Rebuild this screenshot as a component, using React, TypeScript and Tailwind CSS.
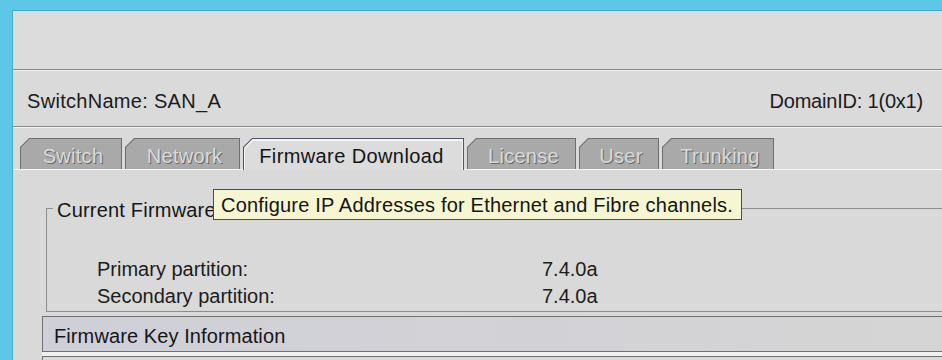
import React from "react";

const font = "font-['Liberation_Sans',Arial,sans-serif]";

function Tab({
  label,
  className,
  active,
}: {
  label: string;
  className: string;
  active?: boolean;
}) {
  if (active) {
    return (
      <div className={`relative z-10 -mb-px h-[32px] ${className}`}>
        <div className="absolute inset-0 bg-[#4f5566] [clip-path:polygon(0_9px,9px_0,100%_0,100%_100%,0_100%)]" />
        <div className="absolute left-[1px] right-[1px] top-[1px] bottom-0 bg-[#f4f4f4] [clip-path:polygon(0_8.5px,8.5px_0,100%_0,100%_100%,0_100%)]" />
        <div className="absolute left-[2px] right-[2px] top-[3px] bottom-0 bg-[#dcdcdc] [clip-path:polygon(0_8px,8px_0,100%_0,100%_100%,0_100%)]" />
        <div className="relative flex h-full items-center justify-center pt-[4px] pr-[4px] text-[20px] tracking-[0.4px] text-[#151515]">
          {label}
        </div>
      </div>
    );
  }
  return (
    <div className={`relative h-[31px] ${className}`}>
      <div className="absolute inset-0 bg-[#6e6e6e] [clip-path:polygon(0_9px,9px_0,100%_0,100%_100%,0_100%)]" />
      <div className="absolute left-[1px] right-[1px] top-[1px] bottom-0 bg-[#a9a9a9] [clip-path:polygon(0_8.5px,8.5px_0,100%_0,100%_100%,0_100%)]" />
      <div className="relative flex h-full items-center justify-center pt-[4px] pl-[4px] text-[20px] tracking-[0.3px] text-[#dadada] [text-shadow:1px_1px_0_#666666]">
        {label}
      </div>
    </div>
  );
}

export default function App() {
  return (
    <div
      className={`relative h-[360px] w-[942px] overflow-hidden bg-[#5cc7e7] pt-[10px] pl-[12px] ${font}`}
    >
      <div className="flex h-[350px] flex-col border-l border-t border-[#4aa9c8] bg-[#dadada]">
        {/* top empty area */}
        <div className="h-[58px] bg-[#dcdcdc]" />
        <div className="border-t border-[#888888]" />
        <div className="border-t border-[#f2f2f2]" />
        {/* header row */}
        <div className="flex h-[55px] items-center justify-between pt-[5px] pl-[14px] pr-[19px] text-[20px] text-[#1c1c1c]">
          <span className="tracking-[0.3px]">SwitchName: SAN_A</span>
          <span className="tracking-[-0.2px]">DomainID: 1(0x1)</span>
        </div>
        <div className="border-t border-[#8a8a8a]" />
        <div className="border-t border-[#f4f4f4]" />
        {/* tab strip */}
        <div className="flex items-end gap-[3px] pt-[10px] pl-[7px]">
          <Tab label="Switch" className="w-[102px]" />
          <Tab label="Network" className="w-[115px]" />
          <Tab label="Firmware Download" className="w-[221px]" active />
          <Tab label="License" className="w-[109px]" />
          <Tab label="User" className="w-[80px]" />
          <Tab label="Trunking" className="w-[112px]" />
        </div>
        {/* content */}
        <div className="flex flex-1 flex-col border-t border-[#f6f6f6] bg-[#d9d9d9]">
          <div className="relative ml-[33px] mt-[38px] h-[104px] border-b border-l border-t border-[#8d8d8d]">
            <span className="absolute -top-[11px] left-[6px] bg-[#d9d9d9] px-[4px] text-[20px] leading-[24px] tracking-[0.2px] text-[#161616]">
              Current Firmware
            </span>
            <div className="flex flex-col pt-[47px] pl-[50px] text-[20px] leading-[27px] text-[#1c1c1c]">
              <div className="flex">
                <span className="w-[445px]">Primary partition:</span>
                <span>7.4.0a</span>
              </div>
              <div className="flex">
                <span className="w-[445px]">Secondary partition:</span>
                <span>7.4.0a</span>
              </div>
            </div>
          </div>
          <div className="ml-[29px] mt-[4px] flex h-[36px] items-center border-b border-l border-t border-[#707070] bg-linear-to-r from-[#cfcfd8] to-[#d5d5d5] pt-[4px] pl-[11px] text-[20px] tracking-[0.1px] text-[#161616]">
            Firmware Key Information
          </div>
          <div className="ml-[29px] h-[4px] bg-[#f0f0f0]" />
          <div className="ml-[29px] flex-1 border-l border-t border-[#707070]" />
        </div>
      </div>

      {/* tooltip */}
      <div className="absolute left-[213px] top-[189px] flex h-[31px] w-[529px] items-center border border-[#4c4c4c] bg-[#f6f6d3] pl-[7px] text-[20px] tracking-[0.2px] text-[#151515]">
        Configure IP Addresses for Ethernet and Fibre channels.
      </div>
    </div>
  );
}
